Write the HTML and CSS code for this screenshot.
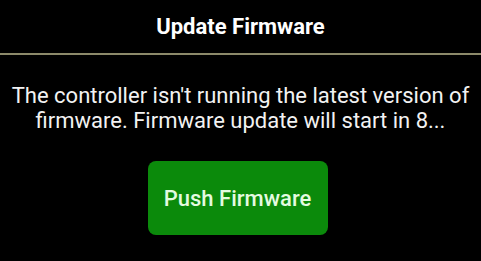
FILE: index.html
```html
<!DOCTYPE html>
<html>
<head>
<meta charset="utf-8">
<link rel="stylesheet" href="styles.css">
</head>
<body>
<div class="dialog">
  <div class="header">Update Firmware</div>
  <div class="divider"></div>
  <p class="message">The controller isn't running the latest version of firmware. Firmware update will start in 8...</p>
  <div class="actions">
    <button class="push-btn">Push Firmware</button>
  </div>
</div>
</body>
</html>
```
FILE: styles.css
```css
html, body {
  margin: 0;
  padding: 0;
  background: #000;
  width: 481px;
  height: 261px;
  overflow: hidden;
}
.dialog {
  display: flex;
  flex-direction: column;
  font-family: Roboto, "Noto Sans", sans-serif;
  color: #f2f2f2;
}
.header {
  font-weight: bold;
  font-size: 22px;
  text-align: center;
  height: 53px;
  line-height: 53px;
  color: #fff;
}
.divider {
  height: 2px;
  background: #8c8a6a;
}
.message {
  margin: 28px 4px 0;
  font-size: 22px;
  line-height: 25px;
  text-align: center;
}
.actions {
  display: flex;
  justify-content: center;
  margin-top: 28px;
}
.push-btn {
  width: 180px;
  height: 74px;
  border: none;
  border-radius: 8px;
  background: #0b8a0b;
  color: #e4fbe0;
  font-family: Roboto, "Noto Sans", sans-serif;
  font-weight: 500;
  font-size: 22px;
  padding: 0;
  margin-left: -6px;
}
```
